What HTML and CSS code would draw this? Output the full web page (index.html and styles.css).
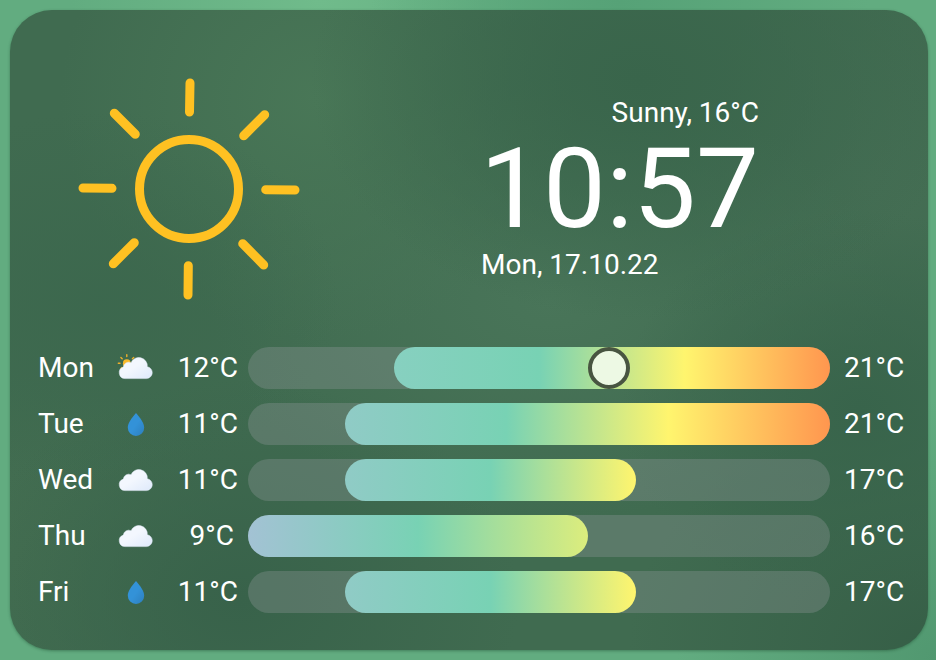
FILE: index.html
```html
<!DOCTYPE html>
<html lang="en">
<head>
<meta charset="utf-8">
<title>Weather</title>
<link rel="stylesheet" href="styles.css">
</head>
<body>
<svg class="defs" width="0" height="0" aria-hidden="true">
  <defs>
    <linearGradient id="cloudFill" x1="0" y1="0" x2="1" y2="1">
      <stop offset="0.45" stop-color="#f3f7fe"/><stop offset="1" stop-color="#dee9fb"/>
    </linearGradient>
    <linearGradient id="dropFill" x1="0" y1="0" x2="1" y2="1">
      <stop offset="0.5" stop-color="#3392d8"/><stop offset="1" stop-color="#2d7fbd"/>
    </linearGradient>
    <symbol id="cloud" viewBox="0 0 42 42">
      <path d="M10 31.600a5.900 5.900 0 0 1-1.700-11.500a5.400 5.400 0 0 1 7.700-4.400a8.500 8.500 0 0 1 16.300 4a6 6 0 0 1-.7 11.900z" fill="url(#cloudFill)" stroke="#e6effc" stroke-width=".5"/>
    </symbol>
    <symbol id="partly" viewBox="0 0 42 42">
      <g stroke="#efb02a" stroke-width="1.400" stroke-linecap="round">
        <path d="M11.800 7.800v1.800M5.900 10.400l1.300 1.300M3.300 16.300h1.700M18.700 10.400l-1.300 1.300M6 21.400l1-1"/>
      </g>
      <circle cx="11.800" cy="16.200" r="3.900" fill="#f8b92b"/>
      <use href="#cloud"/>
    </symbol>
    <symbol id="drop" viewBox="0 0 42 42">
      <path d="M21 10c-4.600 5.500-8.200 10-8.200 14.800a8.200 8.200 0 0 0 16.400 0c0-4.800-3.600-9.300-8.200-14.800z" fill="url(#dropFill)"/>
    </symbol>
  </defs>
</svg>
<main class="card">
  <section class="today">
    <svg class="sun" viewBox="0 0 240 240" fill="none" stroke="#ffc122" stroke-width="9" stroke-linecap="round">
      <circle cx="120" cy="120" r="49.500"/>
      <path d="M121 14L120.500 43M195.700 45.700L174.700 66.700M196.700 120.700L226 121M173.700 174.700L194.700 196M119.300 196.700L119 226M65.300 173.700L44.300 194.700M14 119L43 119.300M45.300 44.300L66.300 65.300"/>
    </svg>
    <div class="summary">
      <div class="condition">Sunny, 16°C</div>
      <div class="clock">10:57</div>
      <div class="date">Mon, 17.10.22</div>
    </div>
  </section>
  <section class="forecast">
    <div class="row">
      <span class="day">Mon</span><svg class="icon"><use href="#partly"/></svg><span class="low">12°C</span>
      <div class="track"><div class="range to-hot from-12" style="margin-left:25%;width:75%"></div><i class="now" style="left:58.420%"></i></div>
      <span class="high">21°C</span>
    </div>
    <div class="row">
      <span class="day">Tue</span><svg class="icon"><use href="#drop"/></svg><span class="low">11°C</span>
      <div class="track"><div class="range to-hot from-11" style="margin-left:16.667%;width:83.333%"></div></div>
      <span class="high">21°C</span>
    </div>
    <div class="row">
      <span class="day">Wed</span><svg class="icon"><use href="#cloud"/></svg><span class="low">11°C</span>
      <div class="track"><div class="range to-warm from-11" style="margin-left:16.667%;width:50%"></div></div>
      <span class="high">17°C</span>
    </div>
    <div class="row">
      <span class="day">Thu</span><svg class="icon"><use href="#cloud"/></svg><span class="low short">9°C</span>
      <div class="track"><div class="range to-mild from-9" style="margin-left:0;width:58.420%"></div></div>
      <span class="high">16°C</span>
    </div>
    <div class="row">
      <span class="day">Fri</span><svg class="icon"><use href="#drop"/></svg><span class="low">11°C</span>
      <div class="track"><div class="range to-warm from-11" style="margin-left:16.667%;width:50%"></div></div>
      <span class="high">17°C</span>
    </div>
  </section>
</main>
</body>
</html>
```
FILE: styles.css
```css
* { box-sizing: border-box; }

body {
  margin: 0;
  width: 936px;
  height: 660px;
  padding: 10px 8px 10px 10px;
  overflow: hidden;
  font-family: Roboto, sans-serif;
  font-size: 28px;
  line-height: 32px;
  color: #fff;
  background:
    radial-gradient(circle at 100% 100%, #519870, transparent 260px),
    radial-gradient(circle at 620px 0, #56a277, transparent 250px),
    radial-gradient(circle at 320px 0, #70bb8b, transparent 250px),
    #62ac80;
}

.defs { display: block; position: absolute; }

.card {
  width: 918px;
  height: 640px;
  border-radius: 42px;
  padding: 58px 0 0 28px;
  box-shadow: 0 1px 3px rgba(20, 60, 35, .4);
  background:
    radial-gradient(ellipse 330px 240px at 630px 70px, #39654b, transparent),
    radial-gradient(ellipse 240px 190px at 90px 290px, #3b674dcc, transparent),
    radial-gradient(ellipse 240px 200px at 850px 400px, #38644b, transparent),
    radial-gradient(ellipse 300px 240px at 918px 640px, #365f47, transparent),
    radial-gradient(ellipse 280px 220px at 230px 590px, #38624a, transparent),
    radial-gradient(ellipse 260px 240px at 310px 90px, #497757, transparent),
    radial-gradient(ellipse 340px 220px at 540px 290px, #497559, transparent),
    radial-gradient(ellipse 190px 220px at 860px 170px, #456e54, transparent),
    radial-gradient(ellipse 220px 180px at 0 540px, #446e51, transparent),
    #406b50;
}

.today {
  height: 279px;
  padding-left: 31px;
  display: flex;
  align-items: flex-start;
}

.sun { width: 240px; height: 240px; margin-top: 1px; }

.summary { margin: 29px 0 0 171px; width: 280px; }
.condition { padding-right: 1px; text-align: right; }
.clock { margin-top: 4px; font-size: 112px; line-height: 112px; white-space: nowrap; }
.date { margin-top: 4px; padding-left: 1px; }

.forecast { display: grid; gap: 14px; }

.row {
  display: grid;
  grid-template-columns: 77px 42px 81px 10px 582px 14px 70px;
  height: 42px;
  align-items: center;
}

.icon { width: 42px; height: 42px; display: block; }
.low { text-align: right; }
.low.short { padding-right: 4px; }

.track {
  grid-column: 5;
  position: relative;
  height: 42px;
  border-radius: 21px;
  background: rgba(150, 155, 160, .32);
}

.high { grid-column: 7; }

.range { height: 42px; border-radius: 21px; }
.from-9 { --start: #a3c2d4; }
.from-11 { --start: #90cbc6; }
.from-12 { --start: #87d0c0; }
.to-hot { background: linear-gradient(90deg, var(--start), #78d2b4 33.300%, #fff56e 66.700%, #ff964f); }
.to-warm { background: linear-gradient(90deg, var(--start), #78d2b4 50%, #fff56e); }
.to-mild { background: linear-gradient(90deg, var(--start), #78d2b4 50%, #dced7d); }

.now {
  position: absolute;
  top: 0;
  width: 42px;
  height: 42px;
  border: 4px solid #485541;
  border-radius: 50%;
  background: #edf9e4;
}
```
